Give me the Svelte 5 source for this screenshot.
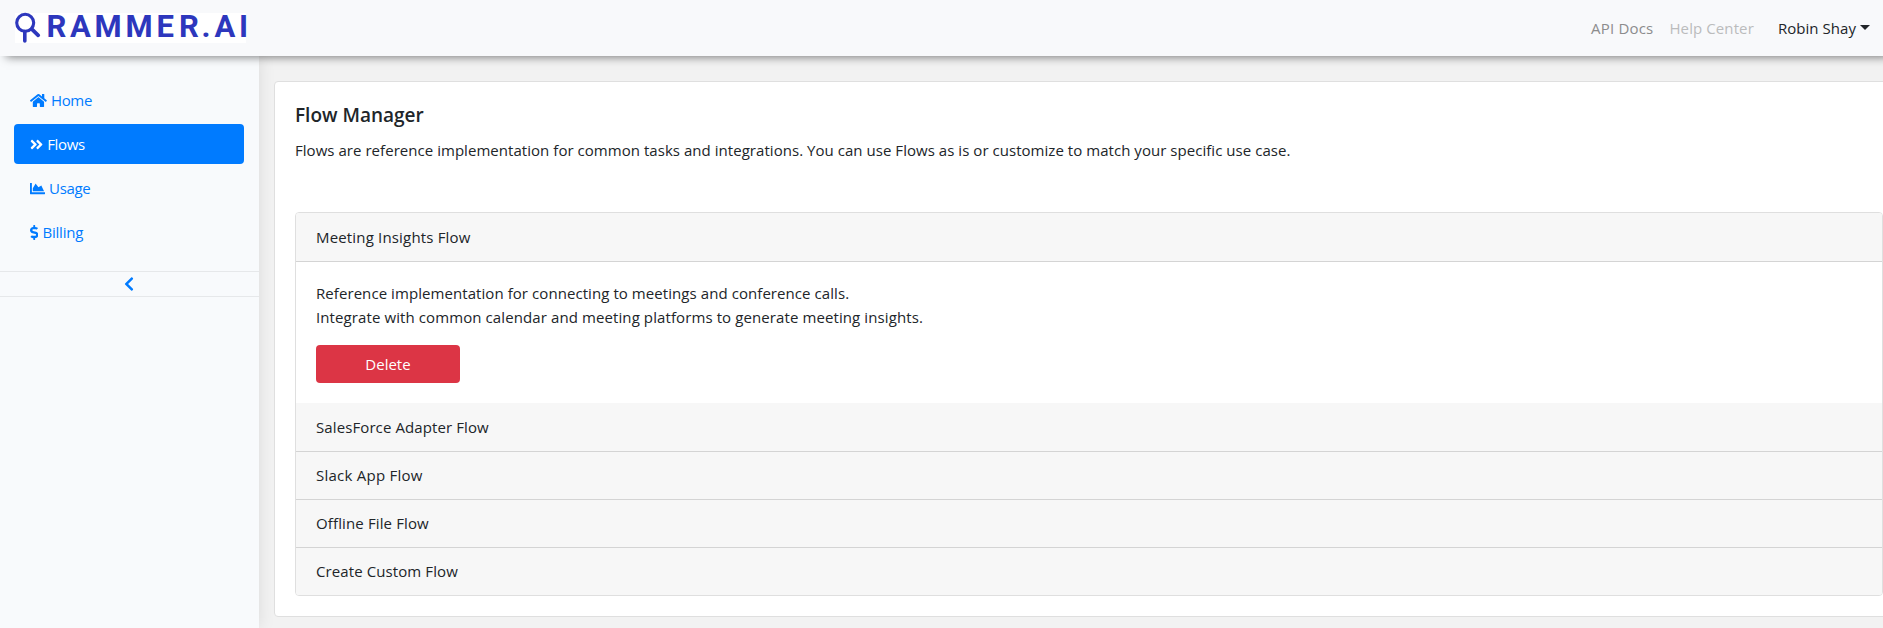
<script>
  const links = [
    {
      name: 'Home', w: 576, ls: -0.3,
      d: 'M280.37 148.26L96 300.11V464a16 16 0 0 0 16 16l112.06-.29a16 16 0 0 0 15.92-16V368a16 16 0 0 1 16-16h64a16 16 0 0 1 16 16v95.64a16 16 0 0 0 16 16.05L464 480a16 16 0 0 0 16-16V300L295.67 148.26a12.19 12.19 0 0 0-15.3 0zM571.6 251.47L488 182.56V44.05a12 12 0 0 0-12-12h-56a12 12 0 0 0-12 12v72.61L318.47 43a48 48 0 0 0-61 0L4.34 251.47a12 12 0 0 0-1.6 16.9l25.5 31A12 12 0 0 0 45.15 301l235.22-193.74a12.19 12.19 0 0 1 15.3 0L530.9 301a12 12 0 0 0 16.9-1.6l25.5-31a12 12 0 0 0-1.7-16.93z'
    },
    {
      name: 'Flows', w: 448, ls: -0.3, active: true,
      d: 'M224.3 273l-136 136c-9.4 9.4-24.6 9.4-33.9 0l-22.6-22.6c-9.4-9.4-9.4-24.6 0-33.9l96.4-96.4-96.4-96.4c-9.4-9.4-9.4-24.6 0-33.9L54.3 103c9.4-9.4 24.6-9.4 33.9 0l136 136c9.5 9.4 9.5 24.6.1 34zm192-34l-136-136c-9.4-9.4-24.6-9.4-33.9 0l-22.6 22.6c-9.4 9.4-9.4 24.6 0 33.9l96.4 96.4-96.4 96.4c-9.4 9.4-9.4 24.6 0 33.9l22.6 22.6c9.4 9.4 24.6 9.4 33.9 0l136-136c9.4-9.2 9.4-24.4 0-33.8z'
    },
    {
      name: 'Usage', w: 512, ls: -0.3,
      d: 'M500 384c6.6 0 12 5.4 12 12v40c0 6.6-5.4 12-12 12H12c-6.6 0-12-5.4-12-12V76c0-6.6 5.4-12 12-12h40c6.6 0 12 5.4 12 12v308h436zM372.7 159.5L288 216l-85.3-113.7c-5.1-6.8-15.5-6.3-19.9 1L96 248v104h384l-89.9-187.8c-3.2-6.5-11.4-8.7-17.4-4.7z'
    },
    {
      name: 'Billing', w: 288, ls: -0.2,
      d: 'M209.2 233.4l-108-31.6C88.7 198.2 80 186.5 80 173.5c0-16.3 13.2-29.5 29.5-29.5h66.3c12.2 0 24.2 3.7 34.2 10.5 6.1 4.1 14.3 3.1 19.5-2l34.8-34c7.1-6.9 6.1-18.4-1.8-24.5C238 74.8 207.4 64.1 176 64V16c0-8.8-7.2-16-16-16h-32c-8.8 0-16 7.2-16 16v48h-2.5C45.8 64-5.4 118.7.5 183.6c4.2 46.1 39.4 83.6 83.8 96.6l102.5 30c12.5 3.7 21.2 15.3 21.2 28.3 0 16.3-13.2 29.5-29.5 29.5h-66.3C100 368 88 364.3 78 357.5c-6.1-4.1-14.3-3.1-19.5 2l-34.8 34c-7.1 6.9-6.1 18.4 1.8 24.5 24.5 19.2 55.1 29.9 86.5 30v48c0 8.8 7.2 16 16 16h32c8.8 0 16-7.2 16-16v-48.2c46.6-.9 90.3-28.6 105.7-72.7 21.5-61.6-14.6-124.8-72.5-141.7z'
    }
  ];

  const flows = [
    { name: 'SalesForce Adapter Flow', ls: 0.1 },
    { name: 'Slack App Flow', ls: 0.24 },
    { name: 'Offline File Flow', ls: 0.13 },
    { name: 'Create Custom Flow', ls: 0.1 }
  ];
</script>

<div class="page">
  <header class="navbar">
    <a class="brand" href="#home" aria-label="Rammer.AI">
      <svg width="240" height="46" viewBox="0 -8 240 46">
        <g fill="none" stroke="#2d37bd" stroke-linecap="round">
          <circle cx="10.2" cy="9.8" r="8.5" stroke-width="3.1" />
          <path d="M9.8 18.5V28" stroke-width="3.6" />
          <path d="M16.8 16.2L23.2 22.3" stroke-width="3.8" />
        </g>
        <text class="wordmark" y="24.2" x="31.4 55 79.5 110.5 141.5 164 186.5 199.5 224">RAMMER.AI</text>
      </svg>
    </a>
    <nav class="menu">
      <a class="docs" href="#docs">API Docs</a>
      <a class="help" href="#help">Help Center</a>
      <a class="user" href="#user"><span>Robin Shay</span><i class="caret"></i></a>
    </nav>
  </header>

  <div class="body">
    <aside class="sidebar">
      <nav class="pills">
        {#each links as l}
          <a class="pill" class:active={l.active} href="#{l.name}">
            <svg height="15" width={(l.w * 15) / 512} viewBox="0 0 {l.w} 512"><path fill="currentColor" d={l.d} /></svg>
            <span style="letter-spacing: {l.ls}px">{l.name}</span>
          </a>
        {/each}
      </nav>
      <button class="collapse" aria-label="Collapse">
        <svg width="10" height="16" viewBox="0 0 320 512"><path fill="currentColor" d="M34.52 239.03L228.87 44.69c9.37-9.37 24.57-9.37 33.94 0l22.67 22.67c9.36 9.36 9.37 24.52.04 33.9L131.49 256l154.02 154.75c9.34 9.38 9.32 24.54-.04 33.9l-22.67 22.67c-9.37 9.37-24.57 9.37-33.94 0L34.52 272.97c-9.37-9.37-9.37-24.57 0-33.94z" /></svg>
      </button>
    </aside>

    <main class="content">
      <section class="card">
        <h5>Flow Manager</h5>
        <p class="lead">Flows are reference implementation for common tasks and integrations. You can use Flows as is or customize to match your specific use case.</p>
        <div class="accordion">
          <div class="head first">Meeting Insights Flow</div>
          <div class="detail">
            <p><span class="line-a">Reference implementation for connecting to meetings and conference calls.</span><br /><span class="line-b">Integrate with common calendar and meeting platforms to generate meeting insights.</span></p>
            <button class="delete">Delete</button>
          </div>
          {#each flows as f}
            <div class="head" style="letter-spacing: {f.ls}px">{f.name}</div>
          {/each}
        </div>
      </section>
    </main>
  </div>
</div>

<style>
  :global(body) { margin: 0; overflow: hidden; }
  .page, .page :global(*) { box-sizing: border-box; }
  .page {
    display: flex;
    flex-direction: column;
    width: 100%;
    height: 628px;
    overflow: hidden;
    background: #f2f2f2;
    color: #212529;
    font: 15px/24px "Open Sans", "Noto Sans", sans-serif;
  }
  a { text-decoration: none; color: inherit; }
  .navbar {
    position: relative;
    z-index: 2;
    flex: none;
    display: flex;
    align-items: center;
    justify-content: space-between;
    height: 56px;
    padding: 0 13px 0 15px;
    background: #f8f9fb;
    box-shadow: 6px 1px 9px rgba(0, 0, 0, 0.5);
  }
  .brand { display: flex; align-items: center; width: 231px; height: 30px; background: #fff; }
  .brand svg { flex: none; overflow: visible; }
  .wordmark { font: 700 31px Roboto, sans-serif; fill: #2d37bd; }
  .menu { display: flex; align-items: center; }
  .docs { color: #8c8c8d; margin-right: 16px; letter-spacing: 0.2px; }
  .help { color: #bbbcbd; margin-right: 24px; letter-spacing: 0.1px; }
  .user { display: flex; align-items: center; letter-spacing: 0.05px; }
  .caret {
    margin: -2px 0 0 4px;
    border: 5px solid transparent;
    border-top-color: #212529;
    border-bottom: 0;
  }
  .body { flex: 1; display: flex; min-height: 0; }
  .sidebar {
    position: relative;
    z-index: 1;
    flex: none;
    width: 259px;
    padding-top: 24px;
    background: #f8fafc;
    box-shadow: 0 0 16px rgba(0, 0, 0, 0.1);
  }
  .pills { display: flex; flex-direction: column; gap: 4px; padding: 0 15px 0 14px; }
  .pill {
    display: flex;
    align-items: center;
    gap: 4px;
    height: 40px;
    padding: 0 16px;
    border-radius: 4px;
    color: #007bff;
  }
  .pill.active { background: #007bff; color: #fff; }
  .collapse {
    display: flex;
    align-items: center;
    justify-content: center;
    width: 100%;
    height: 26px;
    margin-top: 19px;
    padding: 0 1px 0 0;
    border: solid #e6e8ea;
    border-width: 1px 0;
    background: none;
    color: #007bff;
  }
  .content { flex: 1; min-width: 0; padding: 25px 0 0 15px; }
  .card {
    width: 1630px;
    height: 536px;
    padding: 21px 20px 20px;
    border: 1px solid #dfdfdf;
    border-radius: 4px;
    background: #fff;
  }
  h5 { margin: 0 0 11px; font-size: 19px; line-height: 24px; font-weight: 600; }
  p { margin: 0; }
  .lead { white-space: nowrap; letter-spacing: 0.043px; }
  .accordion {
    width: 1588px;
    margin-top: 50px;
    border: 1px solid #dfdfdf;
    border-radius: 4px;
    overflow: hidden;
  }
  .head {
    height: 49px;
    margin-top: -1px;
    padding: 11px 20px;
    border: solid #d4d4d4;
    border-width: 1px 0;
    background: #f7f7f7;
  }
  .head.first { margin-top: 0; border-top: 0; padding-top: 12px; letter-spacing: 0.17px; }
  .head:last-child { height: 48px; border-bottom: 0; }
  .detail { padding: 19px 20px; height: 142px; }
  .detail + .head { border-top: 0; padding-top: 12px; }
  .detail p { white-space: nowrap; }
  .line-a { letter-spacing: 0.07px; }
  .line-b { letter-spacing: 0.1px; }
  .delete {
    display: block;
    width: 144px;
    height: 38px;
    margin-top: 16px;
    border: 0;
    border-radius: 4px;
    background: #dc3545;
    color: #fff;
    font: inherit;
  }
</style>
